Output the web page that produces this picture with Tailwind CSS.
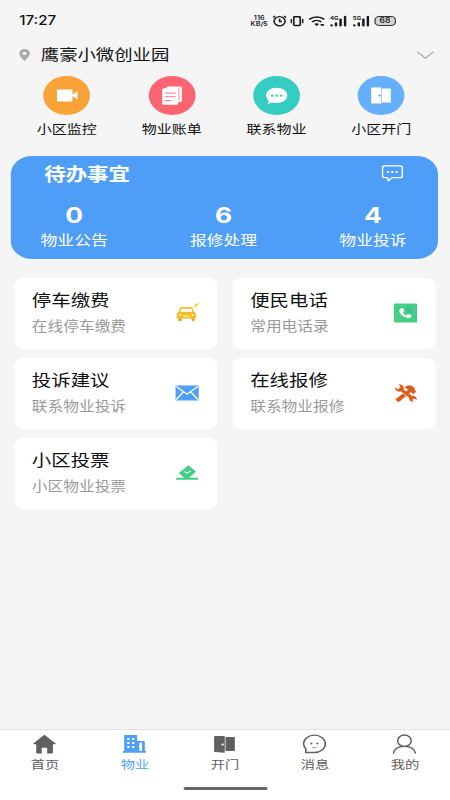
<!DOCTYPE html>
<html lang="zh-CN">
<head>
<meta charset="utf-8">
<title>物业</title>
<script src="https://cdn.jsdelivr.net/npm/@tailwindcss/browser@4"></script>
</head>
<body class="overflow-hidden bg-[#f5f5f5]">
<!-- 375px design, widened to fill the 450px screen -->
<div class="flex h-[800px] w-[375px] origin-top-left scale-x-[1.2] flex-col bg-[#f5f5f5] font-['Noto_Sans_CJK_SC',sans-serif] text-[#111]">

  <header class="flex h-10 shrink-0 items-center justify-between pl-4 pr-[45px]">
    <span class="pt-[2px] font-['Inter',sans-serif] text-[12.6px] font-medium leading-none">17:27</span>
    <div class="flex items-center pt-px text-[#1a1a1a]">
      <div class="flex w-[15px] flex-col items-center font-['Inter',sans-serif] text-[6px] font-semibold leading-[6px]"><span>116</span><span>KB/S</span></div>
      <svg class="ml-[3px] h-3 w-3" viewBox="0 0 12 12" fill="none" stroke="currentColor" stroke-width="1.3"><circle cx="6" cy="6.3" r="4.6"/><path d="M6 3.8v2.7h2M.6 2.5 2.3.9M11.4 2.5 9.7.9"/></svg>
      <svg class="ml-[3.5px] h-3 w-[11px]" viewBox="0 0 11 12" fill="none" stroke="currentColor" stroke-width="1.4"><rect x="2.8" y="1.7" width="5.4" height="8.8" rx=".7"/><path d="M.6 4v4.3M10.4 4v4.3"/></svg>
      <svg class="ml-[4px] h-3 w-[14px]" viewBox="0 0 14 12" fill="none" stroke="currentColor" stroke-width="1.6"><path d="M.7 4.4c3.5-3.3 9-3.3 12.5 0M3 7c2.3-2.1 5.6-2.1 7.8 0"/><path d="m4.8 8.9 2.1 2.2L9 8.9c-1.2-1-3-1-4.2 0z" fill="currentColor" stroke="none"/><path d="M10.2 9.9h2.7" stroke-width="1.8"/></svg>
      <svg class="ml-[4px] h-3 w-[14px]" viewBox="0 0 14 12" fill="none" stroke="currentColor" stroke-width="2.1" stroke-linecap="round"><path d="M1.3 10.3v.1M5 8.3v2.1M8.8 4.5v5.9M12.6 1.8v8.6"/><text x="0" y="4.8" font-size="5" font-weight="700" font-family="Inter" fill="currentColor" stroke="none">4G</text></svg>
      <svg class="ml-[4.5px] h-3 w-[14px]" viewBox="0 0 14 12" fill="none" stroke="currentColor" stroke-width="2.1" stroke-linecap="round"><path d="M1.3 10.3v.1M5 8.3v2.1M8.8 4.5v5.9M12.6 1.8v8.6"/><text x="0" y="4.8" font-size="5" font-weight="700" font-family="Inter" fill="currentColor" stroke="none">5G</text></svg>
      <div class="ml-[4px] flex h-[10px] w-[18.5px] items-center justify-center rounded-[4px] border border-[#333] bg-[#d4d4d4] font-['Inter',sans-serif] text-[7px] font-semibold leading-none">68</div>
    </div>
  </header>

  <div class="flex h-[29px] shrink-0 items-center pl-4 pr-[13.5px]">
    <svg class="h-3 w-[9px]" viewBox="0 0 9 12"><path d="M4.5 0A4.4 4.4 0 0 0 .1 4.4C.1 7.4 4.5 12 4.5 12s4.4-4.6 4.4-7.6A4.4 4.4 0 0 0 4.5 0zm0 6.1a1.7 1.7 0 1 1 0-3.4 1.7 1.7 0 0 1 0 3.4z" fill="#aaa" fill-rule="evenodd"/></svg>
    <h1 class="ml-[9px] flex-1 pb-[2px] text-[15.3px] leading-none">鹰豪小微创业园</h1>
    <svg class="h-2 w-[15px]" viewBox="0 0 15 8" fill="none" stroke="#aaa" stroke-width="1.2"><path d="M.6.6 7.5 7.2 14.4.6"/></svg>
  </div>

  <nav class="mt-[7px] flex h-[79.5px] shrink-0 pl-3 pr-[13.5px] text-[12.5px]">
    <a class="flex flex-1 flex-col items-center gap-[7px] leading-[14px]">
      <span class="flex h-[39px] w-[39px] items-center justify-center rounded-full bg-[#f9a237]"><svg class="h-[13px] w-[18px]" viewBox="0 0 18 13" fill="#fff"><rect x=".4" y=".5" width="13" height="12" rx="1"/><path d="m12.7 6.3 4-3.6q.9-.5.9.5v6.5q0 1-.9.4z"/></svg></span>小区监控</a>
    <a class="flex flex-1 flex-col items-center gap-[7px] leading-[14px]">
      <span class="flex h-[39px] w-[39px] items-center justify-center rounded-full bg-[#fb6470]"><svg class="h-[19px] w-[17px]" viewBox="0 0 17 19"><rect x="3.6" y=".5" width="13" height="15.4" rx="1.5" fill="#fff"/><path d="M13 2.8h1.1v11.4" fill="none" stroke="#fb6470" stroke-width=".8"/><rect x=".2" y="2.3" width="13.3" height="16.4" rx="1.5" fill="#fff"/><path d="M2.2 7.1h9.2M2.2 10.7h9.2M2.2 14.5h5.5" stroke="#fb6470" stroke-width=".8"/></svg></span>物业账单</a>
    <a class="flex flex-1 flex-col items-center gap-[7px] leading-[14px]">
      <span class="flex h-[39px] w-[39px] items-center justify-center rounded-full bg-[#35cdc2]"><svg class="h-[18px] w-[19px]" viewBox="0 0 19 18"><path d="M9.5.8C4.6.8.8 4 .8 8.3c0 2.1.8 4 2.2 5.2L2 17l4-1.5c1 .4 2.2.5 3.5.5 4.9 0 8.9-3.2 8.9-7.6S14.4.8 9.5.8z" fill="#fff"/><g fill="#35cdc2"><circle cx="5.9" cy="8.7" r="1.1"/><circle cx="9.6" cy="8.7" r="1.1"/><circle cx="13.3" cy="8.7" r="1.1"/></g></svg></span>联系物业</a>
    <a class="flex flex-1 flex-col items-center gap-[7px] leading-[14px]">
      <span class="flex h-[39px] w-[39px] items-center justify-center rounded-full bg-[#66affb]"><svg class="h-[17px] w-[17px]" viewBox="0 0 17 17"><rect x="9.3" y="1.5" width="7.4" height="14" rx=".6" fill="#fff"/><path d="M.8.5h8v16h-8q-.5 0-.5-.5V1q0-.5.5-.5z" fill="#fff"/><circle cx="7.3" cy="8.6" r="1.1" fill="#66affb"/></svg></span>小区开门</a>
  </nav>

  <section class="ml-[9.3px] flex h-[103px] w-[356px] shrink-0 flex-col rounded-[18px] bg-[#4e9ef7] pl-[24.5px] pr-[26.5px] text-white">
    <div class="flex h-9 items-center justify-between pl-[3px] pr-[2.5px]">
      <h2 class="text-[17.9px] font-bold leading-none">待办事宜</h2>
      <svg class="h-[17px] w-[18px]" viewBox="0 0 18 17" fill="none" stroke="#fff" stroke-width="1.3" stroke-linejoin="round"><path d="M2.6.8h12.8q1.9 0 1.9 1.9v8q0 1.9-1.9 1.9H8.8L5.6 15.8 4.9 12.6H2.6Q.7 12.6.7 10.7v-8Q.7.8 2.6.8z"/><g fill="#fff" stroke="none"><circle cx="5.4" cy="7" r="1.1"/><circle cx="9" cy="7" r="1.1"/><circle cx="12.6" cy="7" r="1.1"/></g></svg>
    </div>
    <div class="flex justify-between pt-[12px] text-center text-[14px]">
      <div class="flex flex-col gap-[3px] leading-[20px]"><b class="font-['Inter',sans-serif] text-[22px] leading-[22px]">0</b>物业公告</div>
      <div class="flex flex-col gap-[3px] leading-[20px]"><b class="font-['Inter',sans-serif] text-[22px] leading-[22px]">6</b>报修处理</div>
      <div class="flex flex-col gap-[3px] leading-[20px]"><b class="font-['Inter',sans-serif] text-[22px] leading-[22px]">4</b>物业投诉</div>
    </div>
  </section>

  <main class="mt-[19.5px] grid shrink-0 grid-cols-[168.5px_168.5px] gap-x-[13.5px] gap-y-[9.5px] pl-3">
    <article class="flex h-[70.5px] items-center justify-between rounded-[8px] bg-white pl-[14.5px] pr-[15px]">
      <div class="pt-px"><h3 class="text-[16.2px] leading-[25px]">停车缴费</h3><p class="text-[13.1px] leading-[28px] text-[#999]">在线停车缴费</p></div>
      <svg class="h-5 w-5" viewBox="0 0 20 20"><path d="M3.7 5.2Q4 4 5.3 4h7.8q1.2 0 1.5 1.2l1.2 3.9q1.6.5 1.6 2.2v4.3h-1.1v2q0 .8-1.4.8t-1.4-.8v-2h-8v2q0 .8-1.4.8t-1.4-.8v-2H1.3v-4.3q0-1.8 1.5-2.2z" fill="#f6bd27"/><path d="M5 5.7h8.5l.8 3.1H4.1z" fill="#fff"/><circle cx="4.2" cy="12" r=".9" fill="#fff"/><circle cx="14.5" cy="12" r=".9" fill="#fff"/><path d="M6.8 12.7h5.3v1.2H6.8z" fill="#fff0b9"/><path d="M2.6 16v1.7h1.5V16zm11.5 0v1.7h1.5V16z" fill="#ee8c4d"/><path d="m16 3.7 1-2 2-1-.9 1.7z" fill="#f6d33b" stroke="#f6d33b"/></svg>
    </article>
    <article class="flex h-[70.5px] items-center justify-between rounded-[8px] bg-white pl-[14.5px] pr-[15px]">
      <div class="pt-px"><h3 class="text-[16.2px] leading-[25px]">便民电话</h3><p class="text-[13.1px] leading-[28px] text-[#999]">常用电话录</p></div>
      <svg class="h-5 w-5" viewBox="0 0 20 20"><rect x=".2" y=".6" width="19.5" height="18.8" rx="1" fill="#42cf83"/><path d="M5.1 6.2 7 5q.7-.3 1 .4l.9 2q.2.6-.3 1l-1 .8q1 2.3 3.2 3.2l.9-1.1q.5-.5 1-.2l2 1.1q.6.4.3 1-.9 1.9-2.3 1.9c-4.3-.3-7.8-3.7-7.9-7.6q0-.9.3-1.3z" fill="#fff"/><path d="M10.7 7.5q1.6.4 2 2M11 5q3.6.6 4 4.2" fill="none" stroke="#45aaa9" stroke-width="1.3"/></svg>
    </article>
    <article class="flex h-[70.5px] items-center justify-between rounded-[8px] bg-white pl-[14.5px] pr-[15px]">
      <div class="pt-px"><h3 class="text-[16.2px] leading-[25px]">投诉建议</h3><p class="text-[13.1px] leading-[28px] text-[#999]">联系物业投诉</p></div>
      <svg class="h-5 w-5" viewBox="0 0 20 20"><rect x=".2" y="2.6" width="19.4" height="14.8" rx=".6" fill="#4f9ff7"/><path d="m.8 3.4 9.1 7.9L19 3.4M.8 16.6l6-7.7M19 16.6l-6-7.7" fill="none" stroke="#fff" stroke-width="1.2"/></svg>
    </article>
    <article class="flex h-[70.5px] items-center justify-between rounded-[8px] bg-white pl-[14.5px] pr-[15px]">
      <div class="pt-px"><h3 class="text-[16.2px] leading-[25px]">在线报修</h3><p class="text-[13.1px] leading-[28px] text-[#999]">联系物业报修</p></div>
      <svg class="h-5 w-5" viewBox="0 0 20 20" fill="#df5c17" stroke="#df5c17" stroke-width=".4"><path d="M4.8 1.6q3.4.3 3.6 3.7l-.2 1.4 7.2 6.5 1.4-.1q2.5.6 2.3 3.4l-2-1.3-1.7 1.5 1 1.8q-3 .2-3.4-3.1v-.9L6.2 8.2l-1.4.3Q1.5 8.2 1.3 4.8l2.3 1.7 2.3-2z"/><path d="m2.5 15.5 5.3-4.8 2.4 2.3-5 5.1q-1.2 1-2.5-.1-1.4-1.3-.2-2.5zM10 9l2.3-2.2-1.1-1.1q-.8-1-2-1.3 2.5-2.7 5.8-1.4l2.6 2.7v1.8l1.1 1.1-2.2 2.3-1.4-1.5-.9-.3-2.1 2.2z"/></svg>
    </article>
    <article class="flex h-[70.5px] items-center justify-between rounded-[8px] bg-white pl-[14.5px] pr-[15px]">
      <div class="pt-px"><h3 class="text-[16.2px] leading-[25px]">小区投票</h3><p class="text-[13.1px] leading-[28px] text-[#999]">小区物业投票</p></div>
      <svg class="h-5 w-5" viewBox="0 0 20 20"><path d="M11 2.2 17.3 8.6l-5.6 6.2H19v2H.8v-2H7.5L3 9.9z" fill="#43cd89"/><path d="m7.8 8.6 2 1.6 3.3-2.4" fill="none" stroke="#fff" stroke-width=".9"/></svg>
    </article>
  </main>

  <footer class="mt-auto flex h-[71px] shrink-0 flex-col items-center border-t border-[#e3e3e3] bg-white text-[11.9px] text-[#606060]">
    <nav class="grid w-full grid-cols-5 pt-1 leading-[17px]">
      <a class="flex flex-col items-center gap-px"><svg class="mr-[.8px] h-5 w-5" viewBox="0 0 20 20" fill="#606060"><path d="M10 .8 19.4 9.6q.2.7-.8.7h-1.5v8.3q0 .8-.8.8h-4v-5.6H7.8v5.6H4q-.8 0-.8-.8v-8.3H1.5q-1.1 0-.8-.7z"/></svg>首页</a>
      <a class="flex flex-col items-center gap-px text-[#4e9ff8]"><svg class="mr-[.8px] h-5 w-5" viewBox="0 0 20 20"><path d="M1.5 17V1.8q0-.8.8-.8h9.2q.8 0 .8.8v5.1h5.6q.8 0 .8.8V17h1v1.7H.3V17z" fill="#4e9ff8"/><path d="M4 4h1.9v1.9H4zm4 0h1.9v1.9H8zM4 8h1.9v1.9H4zm4 0h1.9v1.9H8zm-4 4h1.9v1.9H4zm4 0h1.9v1.9H8zm6.1-3.2h2.3V17h-2.3z" fill="#fff"/></svg>物业</a>
      <a class="flex flex-col items-center gap-px"><svg class="mr-[.8px] h-5 w-5" viewBox="0 0 20 20" fill="#606060"><path d="M2.5 2h7.8v16.8L2 18q-.6 0-.6-.7V3q0-1 1.1-1zM10.9 3.1h7.8v14h-7.8z"/><circle cx="8.5" cy="10.5" r="1" fill="#fff"/></svg>开门</a>
      <a class="flex flex-col items-center gap-px"><svg class="mr-[.8px] h-5 w-5" viewBox="0 0 20 20" fill="none" stroke="#606060" stroke-width="1.3"><path d="M2.7 18.5 3 15.1A8.7 8.7 0 0 1 1 9.8C1 4.9 5 1.2 10 1.2s9.1 3.7 9.1 8.6-4 8.7-9.1 8.7z" stroke-linejoin="round"/><path d="M8.2 13.2q1.7 1.2 3.6 0" stroke-width=".7"/><circle cx="7.5" cy="9.5" r=".9" fill="#606060" stroke="none"/><circle cx="12.5" cy="9.5" r=".9" fill="#606060" stroke="none"/></svg>消息</a>
      <a class="flex flex-col items-center gap-px"><svg class="mr-[.8px] h-5 w-5" viewBox="0 0 20 20" fill="none" stroke="#606060" stroke-width="1.3"><circle cx="10" cy="6.7" r="5.7"/><path d="M.8 19.6c.6-4.7 4.2-7.2 9.2-7.2s8.6 2.5 9.2 7.2"/></svg>我的</a>
    </nav>
    <div class="mt-[14.5px] h-[3px] w-[70px] rounded-full bg-[#666]"></div>
  </footer>
</div>
</body>
</html>
